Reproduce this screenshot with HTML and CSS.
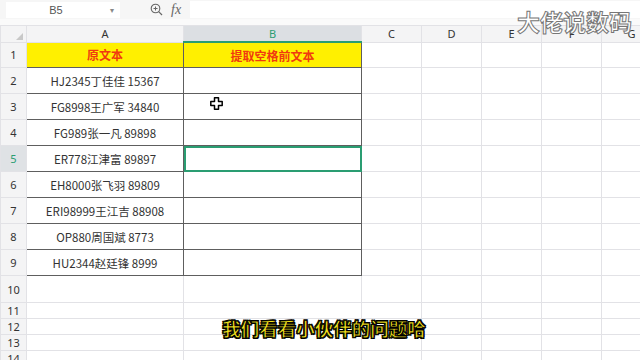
FILE: index.html
```html
<!DOCTYPE html>
<html>
<head>
<meta charset="utf-8">
<link rel="stylesheet" href="styles.css">
</head>
<body>
<div class="app">
  <div class="topbar">
    <div class="namebox"><span class="ref">B5</span><span class="dd">▾</span></div>
    <div class="fbtns">
      <svg class="zoomi" width="13" height="13" viewBox="0 0 13 13"><circle cx="5.5" cy="5.5" r="4.3" fill="none" stroke="#666" stroke-width="1.1"/><path d="M3.5 5.5h4M5.5 3.5v4" stroke="#666" stroke-width="1"/><path d="M8.7 8.7l3.3 3.3" stroke="#666" stroke-width="1.2"/></svg>
      <span class="fx">fx</span>
    </div>
    <div class="finput"></div>
  </div>
  <div class="gap"></div>
  <table class="sheet">
    <colgroup>
      <col class="c-rh"><col class="c-a"><col class="c-b"><col class="c-n"><col class="c-n"><col class="c-n"><col class="c-n"><col class="c-n">
    </colgroup>
    <tr class="hdr">
      <th class="corner"><span class="tri"></span></th><th>A</th><th class="selcol">B</th><th>C</th><th>D</th><th>E</th><th>F</th><th>G</th>
    </tr>
    <tr class="r1">
      <th class="rh">1</th><td class="tt yel">原文本</td><td class="tt yel tr">提取空格前文本</td><td></td><td></td><td></td><td></td><td></td>
    </tr>
    <tr class="r"><th class="rh">2</th><td class="tt">HJ2345丁佳佳 15367</td><td class="tt tr"></td><td></td><td></td><td></td><td></td><td></td></tr>
    <tr class="r"><th class="rh">3</th><td class="tt">FG8998王广军 34840</td><td class="tt tr"></td><td></td><td></td><td></td><td></td><td></td></tr>
    <tr class="r"><th class="rh">4</th><td class="tt">FG989张一凡 89898</td><td class="tt tr"></td><td></td><td></td><td></td><td></td><td></td></tr>
    <tr class="r"><th class="rh selrow">5</th><td class="tt">ER778江津富 89897</td><td class="tt tr sel"></td><td></td><td></td><td></td><td></td><td></td></tr>
    <tr class="r"><th class="rh">6</th><td class="tt">EH8000张飞羽 89809</td><td class="tt tr"></td><td></td><td></td><td></td><td></td><td></td></tr>
    <tr class="r"><th class="rh">7</th><td class="tt">ERI98999王江吉 88908</td><td class="tt tr"></td><td></td><td></td><td></td><td></td><td></td></tr>
    <tr class="r"><th class="rh">8</th><td class="tt">OP880周国斌 8773</td><td class="tt tr"></td><td></td><td></td><td></td><td></td><td></td></tr>
    <tr class="r"><th class="rh">9</th><td class="tt tb">HU2344赵廷锋 8999</td><td class="tt tr tb"></td><td></td><td></td><td></td><td></td><td></td></tr>
    <tr class="r10"><th class="rh">10</th><td></td><td></td><td></td><td></td><td></td><td></td><td></td></tr>
    <tr class="rs"><th class="rh">11</th><td></td><td></td><td></td><td></td><td></td><td></td><td></td></tr>
    <tr class="rs"><th class="rh">12</th><td></td><td></td><td></td><td></td><td></td><td></td><td></td></tr>
    <tr class="rs"><th class="rh">13</th><td></td><td></td><td></td><td></td><td></td><td></td><td></td></tr>
    <tr class="rs"><th class="rh">14</th><td></td><td></td><td></td><td></td><td></td><td></td><td></td></tr>
  </table>
  <svg class="cursor" width="13" height="13" viewBox="0 0 13 13"><path d="M4.5 0.8h4v3.7h3.7v4h-3.7v3.7h-4v-3.7h-3.7v-4h3.7z" fill="#fff" stroke="#000" stroke-width="1.5" stroke-linejoin="round"/></svg>
  <div class="mark">大佬说数码</div>
  <div class="subtitle">我们看看小伙伴的问题哈</div>
</div>
</body>
</html>
```
FILE: styles.css
```css
html, body { margin: 0; padding: 0; }
body { width: 640px; height: 360px; overflow: hidden; background: #fff; font-family: "Noto Sans CJK SC", "Noto Sans", sans-serif; }
.app { position: relative; width: 640px; height: 360px; overflow: hidden; }
.topbar { height: 19px; display: flex; align-items: center; background: #f6f6f6; }
.namebox { margin-left: 6px; width: 114px; height: 16px; background: #fff; display: flex; align-items: center; position: relative; }
.ref { width: 100px; text-align: center; font-size: 11px; color: #555; font-family: "Liberation Sans", sans-serif; }
.dd { font-size: 8px; color: #888; margin-left: 4px; }
.fbtns { width: 70px; display: flex; align-items: center; padding-left: 30px; box-sizing: border-box; gap: 8px; }
.fx { font-family: "Liberation Serif", serif; font-style: italic; font-size: 14px; color: #666; }
.finput { flex: 1; height: 17px; background: #fff; }
.gap { height: 6px; background: #fafafa; }
.sheet { border-collapse: collapse; table-layout: fixed; width: 661px; }
.c-rh { width: 26px; } .c-a { width: 157px; } .c-b { width: 178px; } .c-n { width: 60px; }
.sheet td, .sheet th { padding: 0; border: 1px solid #e2e2e6; overflow: hidden; white-space: nowrap; }
.hdr th { height: 15px; background: #f4f4f5; font-weight: normal; font-size: 11px; color: #333; font-family: "Noto Sans", sans-serif; line-height: 15px; }
.hdr th.selcol { background: #dcdfe3; color: #2a9d72; border-bottom: 2px solid #2a9d72; }
.corner { position: relative; }
.tri { position: absolute; right: 3px; bottom: 2px; width: 0; height: 0; border-left: 7px solid transparent; border-bottom: 7px solid #c8c8c8; }
.rh { background: #f4f4f5; font-weight: normal; font-size: 11px; color: #333; font-family: "Noto Sans", sans-serif; text-align: center; }
.rh.selrow { background: #dfe2e5; color: #2a9d72; }
.r1 td, .r1 th { height: 24px; }
.r td, .r th { height: 25px; }
.r10 td, .r10 th { height: 26px; }
.rs td, .rs th { height: 15px; line-height: 15px; }
.tt { border: 1px solid #5e5e5e !important; text-align: center; font-size: 11.5px; color: #333; }
.yel { background: #fff000; color: #f03a10; font-weight: bold; font-size: 12px; }
.sel { outline: 2px solid #2a9d72; outline-offset: -2px; }
.cursor { position: absolute; left: 210px; top: 97px; }
.mark { position: absolute; left: 517px; top: 4px; font-size: 23px; font-weight: bold; color: #fff; -webkit-text-stroke: 1px #777; letter-spacing: 0; }
.subtitle { position: absolute; left: 8px; right: 0; top: 315px; text-align: center; font-size: 18.5px; font-weight: bold; color: #f4e21c; -webkit-text-stroke: 0.8px #000; text-shadow: 1px 1px 0 #000, -1px -1px 0 #000, 1px -1px 0 #000, -1px 1px 0 #000; }
```
